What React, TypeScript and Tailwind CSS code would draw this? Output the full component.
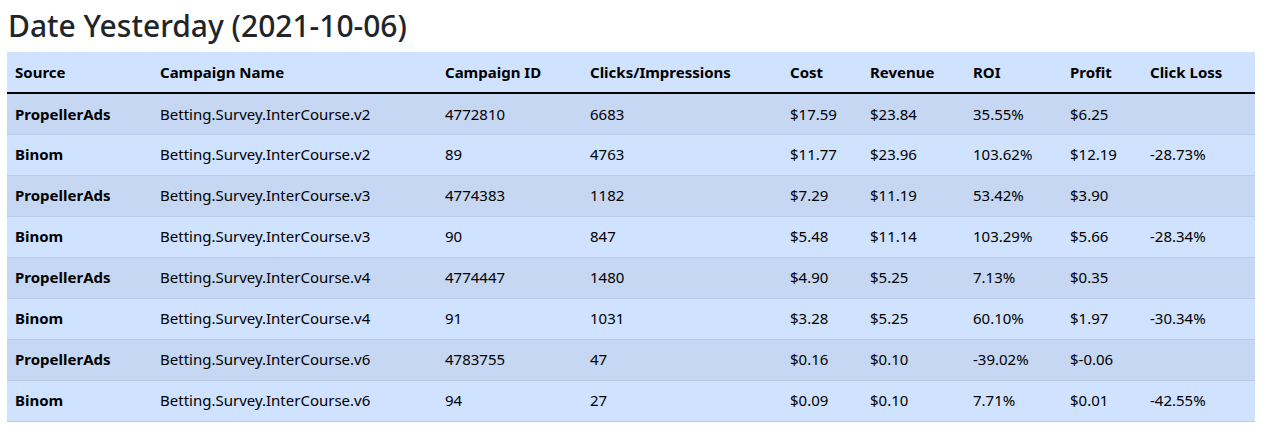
import React from "react";

const rows = [
  ["PropellerAds", "Betting.Survey.InterCourse.v2", "4772810", "6683", "$17.59", "$23.84", "35.55%", "$6.25", ""],
  ["Binom", "Betting.Survey.InterCourse.v2", "89", "4763", "$11.77", "$23.96", "103.62%", "$12.19", "-28.73%"],
  ["PropellerAds", "Betting.Survey.InterCourse.v3", "4774383", "1182", "$7.29", "$11.19", "53.42%", "$3.90", ""],
  ["Binom", "Betting.Survey.InterCourse.v3", "90", "847", "$5.48", "$11.14", "103.29%", "$5.66", "-28.34%"],
  ["PropellerAds", "Betting.Survey.InterCourse.v4", "4774447", "1480", "$4.90", "$5.25", "7.13%", "$0.35", ""],
  ["Binom", "Betting.Survey.InterCourse.v4", "91", "1031", "$3.28", "$5.25", "60.10%", "$1.97", "-30.34%"],
  ["PropellerAds", "Betting.Survey.InterCourse.v6", "4783755", "47", "$0.16", "$0.10", "-39.02%", "$-0.06", ""],
  ["Binom", "Betting.Survey.InterCourse.v6", "94", "27", "$0.09", "$0.10", "7.71%", "$0.01", "-42.55%"],
];

const headers = ["Source", "Campaign Name", "Campaign ID", "Clicks/Impressions", "Cost", "Revenue", "ROI", "Profit", "Click Loss"];
const widths = ["w-[145px]", "w-[285px]", "w-[145px]", "w-[200px]", "w-[80px]", "w-[103px]", "w-[97px]", "w-[80px]", "w-[113px]"];

export default function App() {
  return (
    <div className="bg-white pl-[7px] pr-[25px] pt-[8px]" style={{ fontFamily: '"Noto Sans", sans-serif' }}>
      <h3 className="text-[30px] leading-[36px] font-medium text-[#212529] mb-[8px] pl-[1px]">Date Yesterday (2021-10-06)</h3>
      <table className="w-full table-fixed border-collapse text-[15px] text-black">
        <colgroup>
          {widths.map((w, i) => (
            <col key={i} className={w} />
          ))}
        </colgroup>
        <thead>
          <tr className="bg-[#cfe2ff] border-b-2 border-black">
            {headers.map((h) => (
              <th key={h} className="text-left font-bold px-2 h-[41px] align-middle">{h}</th>
            ))}
          </tr>
        </thead>
        <tbody>
          {rows.map((r, i) => (
            <tr key={i} className={`${i % 2 === 0 ? "bg-[#c5d7f2]" : "bg-[#cfe2ff]"} border-b border-[#bacbe6]`}>
              {r.map((c, j) => (
                <td key={j} className={`px-2 h-[41px] align-middle ${j === 0 ? "font-bold" : ""}`}>{c}</td>
              ))}
            </tr>
          ))}
        </tbody>
      </table>
    </div>
  );
}
